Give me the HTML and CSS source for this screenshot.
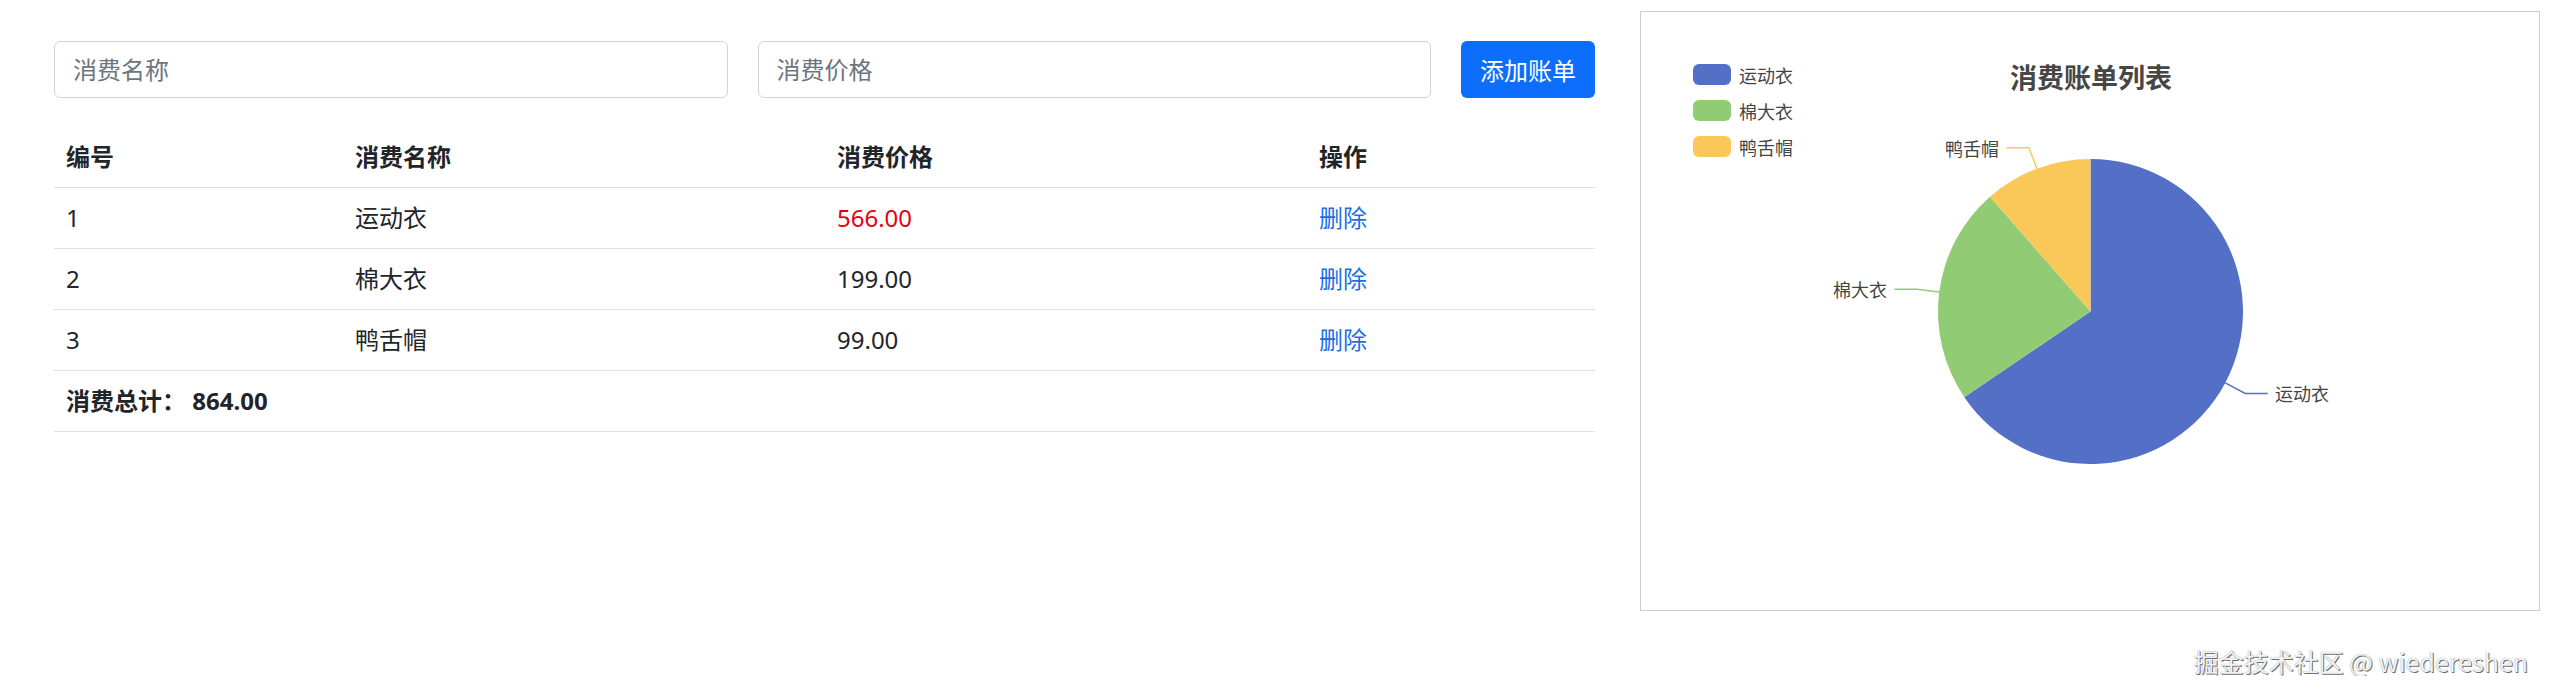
FILE: index.html
```html
<!DOCTYPE html>
<html lang="zh-CN">
<head>
<meta charset="utf-8">
<title>消费账单</title>
<link rel="stylesheet" href="styles.css">
</head>
<body>
<div class="page">
  <div class="main">
    <div class="form-row">
      <input class="input" type="text" placeholder="消费名称">
      <input class="input" type="text" placeholder="消费价格">
      <button class="btn" type="button">添加账单</button>
    </div>
    <table class="table">
      <colgroup>
        <col class="c-id"><col class="c-name"><col class="c-price"><col class="c-op">
      </colgroup>
      <thead>
        <tr><th>编号</th><th>消费名称</th><th>消费价格</th><th>操作</th></tr>
      </thead>
      <tbody>
        <tr><td>1</td><td>运动衣</td><td class="expensive">566.00</td><td><a class="link" href="#">删除</a></td></tr>
        <tr><td>2</td><td>棉大衣</td><td>199.00</td><td><a class="link" href="#">删除</a></td></tr>
        <tr><td>3</td><td>鸭舌帽</td><td>99.00</td><td><a class="link" href="#">删除</a></td></tr>
        <tr><td colspan="4" class="total">消费总计： 864.00</td></tr>
      </tbody>
    </table>
  </div>
  <div class="chart-card">
    <svg class="chart" width="898" height="598" viewBox="0 0 898 598" xmlns="http://www.w3.org/2000/svg">
      <text class="chart-title" x="450" y="64">消费账单列表</text>
      <g class="legend">
        <rect x="52" y="52" width="38" height="21" rx="6" fill="#5470c6"/>
        <text x="98" y="62.5">运动衣</text>
        <rect x="52" y="88" width="38" height="21" rx="6" fill="#91cc75"/>
        <text x="98" y="98.5">棉大衣</text>
        <rect x="52" y="124" width="38" height="21" rx="6" fill="#fac858"/>
        <text x="98" y="134.5">鸭舌帽</text>
      </g>
      <path d="M449.5,299.5 L449.5,147 A152.5,152.5 0 1 1 323.32,385.15 Z" fill="#5470c6"/>
      <path d="M449.5,299.5 L323.32,385.15 A152.5,152.5 0 0 1 348.95,184.84 Z" fill="#91cc75"/>
      <path d="M449.5,299.5 L348.95,184.84 A152.5,152.5 0 0 1 449.5,147 Z" fill="#fac858"/>
      <polyline points="584.3,370.9 604.2,381.4 626.7,381.4" fill="none" stroke="#5470c6" stroke-width="1.5"/>
      <polyline points="298.2,280.1 275.9,277.3 253.4,277.3" fill="none" stroke="#91cc75" stroke-width="1.5"/>
      <polyline points="395.9,156.7 387.9,135.7 365.4,135.7" fill="none" stroke="#fac858" stroke-width="1.5"/>
      <g class="labels">
        <text x="634" y="381.4">运动衣</text>
        <text class="end" x="246" y="277.3">棉大衣</text>
        <text class="end" x="358" y="135.7">鸭舌帽</text>
      </g>
    </svg>
  </div>
</div>
<div class="watermark">掘金技术社区 @ wiedereshen</div>
</body>
</html>
```

FILE: styles.css
```css
body {
  margin: 0;
  background: #fff;
  color: #212529;
  font-family: "Noto Sans", "Noto Sans CJK SC", sans-serif;
}

.page {
  display: flex;
  align-items: flex-start;
  padding-left: 54px;
}

.main {
  width: 1541px;
  padding-top: 41px;
}

.form-row {
  display: flex;
  gap: 30px;
}

.input {
  flex: 1;
  min-width: 0;
  height: 57px;
  box-sizing: border-box;
  border: 1px solid #ced4da;
  border-radius: 6px;
  padding: 0 18px;
  font-family: "Noto Sans", "Noto Sans CJK SC", sans-serif;
  font-size: 24px;
  color: #212529;
  background: #fff;
  outline: none;
}

.input::placeholder {
  color: #6c757d;
}

.btn {
  width: 134px;
  height: 57px;
  flex: none;
  border: none;
  border-radius: 6px;
  background: #0d6efd;
  color: #fff;
  font-family: "Noto Sans", "Noto Sans CJK SC", sans-serif;
  font-size: 24px;
  padding: 0;
}

.table {
  width: 100%;
  margin-top: 29px;
  border-collapse: collapse;
  table-layout: fixed;
  font-size: 24px;
  line-height: 36px;
}

.c-id { width: 289px; }
.c-name { width: 482px; }
.c-price { width: 482px; }
.c-op { width: 288px; }

.table th,
.table td {
  padding: 12px 12px;
  border-bottom: 1px solid #dee2e6;
  text-align: left;
  vertical-align: middle;
}

.table th {
  font-weight: 700;
}

.expensive {
  color: #e60012;
}

.link {
  color: #1a6ee8;
  text-decoration: none;
}

.total {
  font-weight: 700;
}

.chart-card {
  margin-left: 45px;
  margin-top: 11px;
  width: 900px;
  height: 600px;
  box-sizing: border-box;
  border: 1px solid #cccccc;
}

.chart {
  display: block;
  font-family: "Noto Sans CJK SC", sans-serif;
}

.chart-title {
  font-size: 27px;
  font-weight: 700;
  fill: #464646;
  text-anchor: middle;
  dominant-baseline: central;
}

.legend text,
.labels text {
  font-size: 18px;
  fill: #444;
  dominant-baseline: central;
}

.labels .end {
  text-anchor: end;
}

.watermark {
  margin-top: 35px;
  padding-right: 22px;
  text-align: right;
  font-family: "Noto Sans CJK SC", sans-serif;
  font-size: 25px;
  line-height: 30px;
  color: #f2f2f2;
  text-shadow: 1px 1px 0 #6e6e6e, 0 0 1px #8a8a8a;
}
```
